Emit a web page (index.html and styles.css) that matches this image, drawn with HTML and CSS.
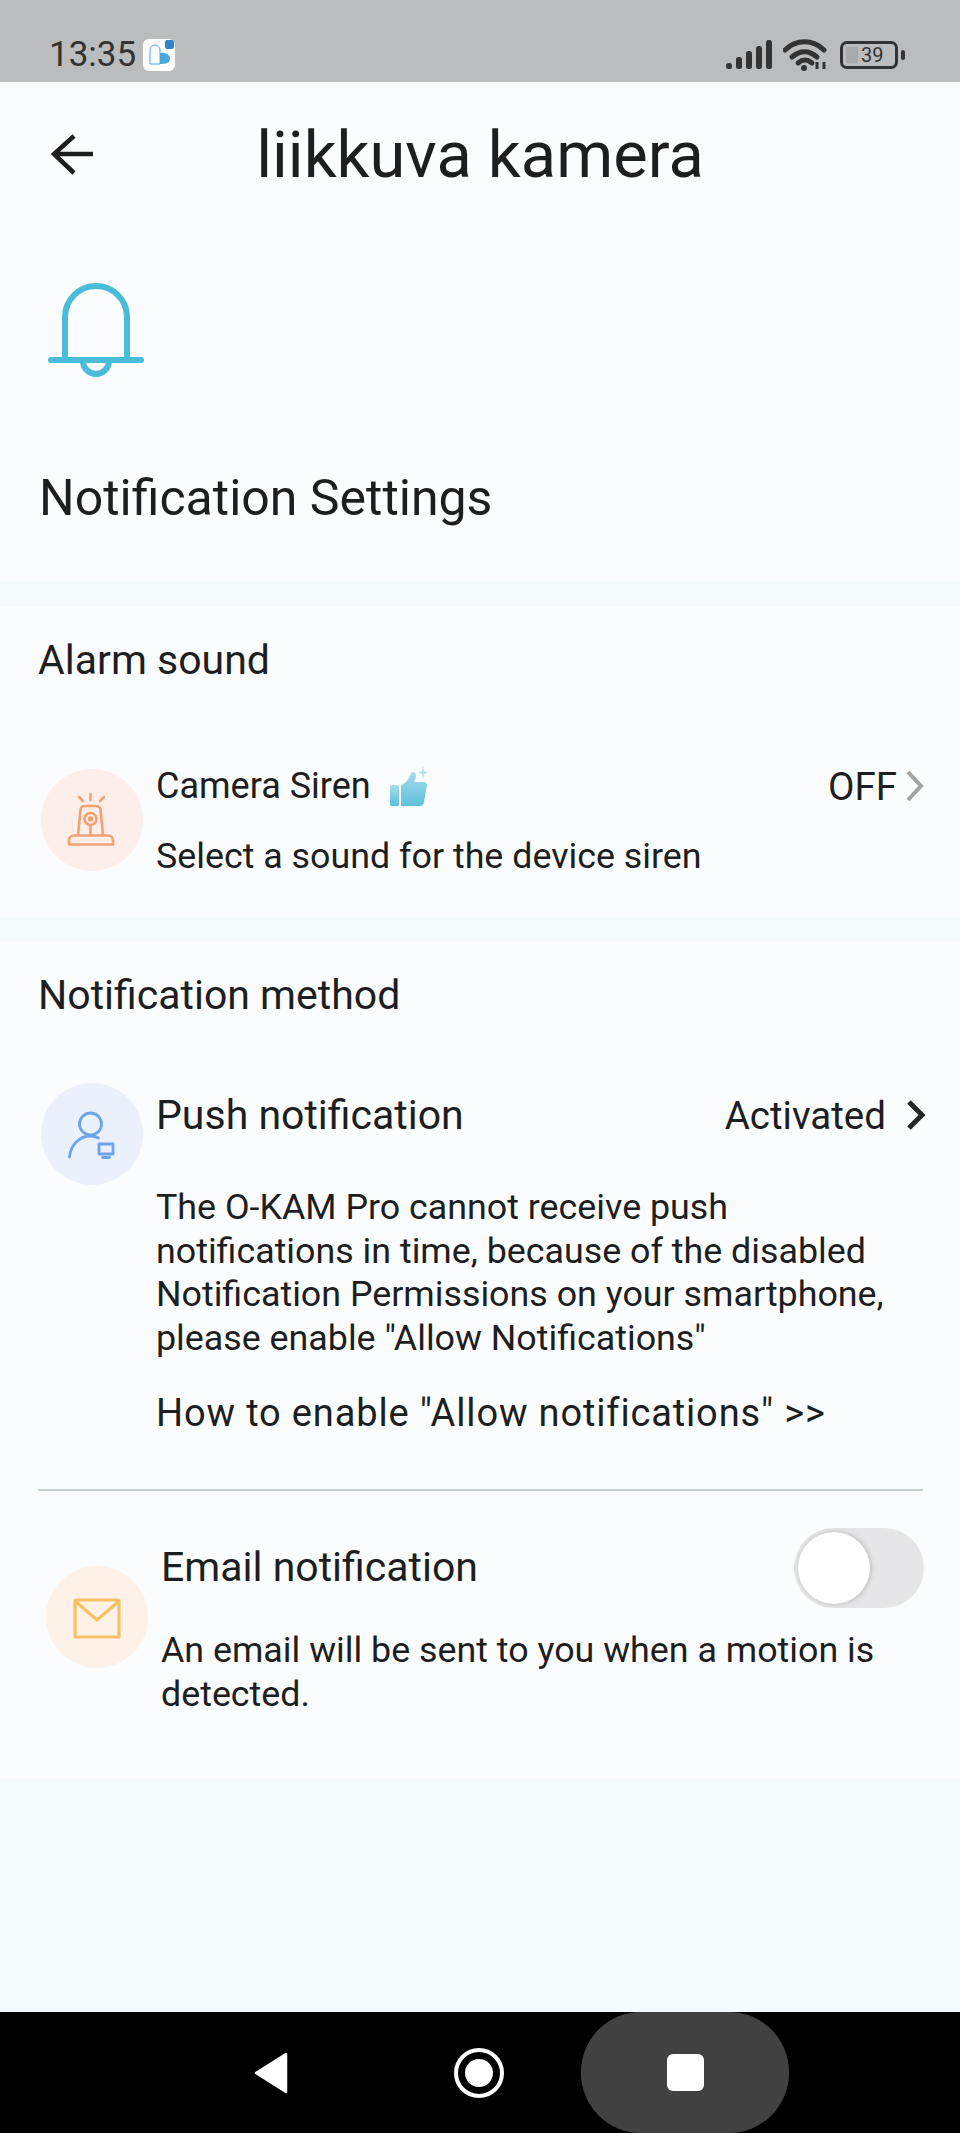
FILE: index.html
```html
<html>
  <head>
    <link rel="stylesheet" href="styles.css">
    <title>Notification Settings</title>
  </head>
  <body>
    <div class="status">
      <span class="time">13:35</span>
      <svg class="app-icon" width="32" height="32" viewBox="0 0 32 32">
        <rect width="32" height="32" rx="6" fill="#fff"/>
        <path d="M7 25V11a5 5 0 0 1 10 0v14z" fill="none" stroke="#4aa8dc" stroke-width="1"/>
        <path d="M17 14c6-1 10 2 10 6s-5 5-10 5z" fill="#4aa8dc"/>
        <rect x="22" y="1" width="9" height="9" rx="2" fill="#2f86cf"/>
      </svg>
      <div class="status-right">
        <svg width="46" height="29" viewBox="0 0 46 29" fill="#333">
          <rect x="0" y="23" width="6" height="6" rx="2.5"/>
          <rect x="10" y="17" width="6" height="12" rx="2.5"/>
          <rect x="20" y="11" width="6" height="18" rx="2.5"/>
          <rect x="30" y="6" width="6" height="23" rx="2.5"/>
          <rect x="40" y="0" width="6" height="29" rx="2.5"/>
        </svg>
        <svg class="wifi" width="46" height="32" viewBox="0 0 46 32" fill="none" stroke="#333" stroke-width="5" stroke-linecap="round">
          <path d="M2 11C13 0 30 0 41 11"/>
          <path d="M9 18c8-7 17-7 25 0"/>
          <path d="M15 24c5-4 9-4 14 0"/>
          <circle cx="21" cy="29" r="3" fill="#333" stroke="none"/>
          <path d="M34 23v7M41 23v7" stroke-width="3" stroke-linecap="butt"/>
        </svg>
        <div class="battery">
          <div class="battery-fill"></div>
          <span class="battery-num">39</span>
        </div>
        <div class="battery-nub"></div>
      </div>
    </div>

    <div class="topbar">
      <svg class="back" width="44" height="44" viewBox="0 0 44 44" fill="none" stroke="#1c1e20" stroke-width="4.5">
        <path d="M44 21H5M25 3L5 21l20 19"/>
      </svg>
      <h1 class="title">liikkuva kamera</h1>
    </div>

    <div class="hero">
      <svg class="bell" width="96" height="95" viewBox="0 0 96 95" fill="none" stroke="#48bcd8" stroke-width="6" stroke-linecap="round">
        <path d="M17 77V34a31 31 0 0 1 62 0v43"/>
        <path d="M3 77h90"/>
        <path d="M35 78a13 13 0 0 0 26 0"/>
      </svg>
      <h2 class="hero-title">Notification Settings</h2>
    </div>

    <div class="section section-alarm">
      <h3 class="section-title">Alarm sound</h3>
      <div class="row row-siren">
        <div class="badge badge-red">
          <svg width="102" height="102" viewBox="0 0 102 102" fill="none" stroke="#f3a274" stroke-width="2.6" stroke-linecap="round" stroke-linejoin="round">
            <path d="M49.5 25v6M38 28l4 4M63 28l-4 4"/>
            <path d="M37 66l2.500-25a4 4 0 0 1 4-4h12a4 4 0 0 1 4 4l2.500 25"/>
            <circle cx="49.5" cy="50" r="6"/>
            <circle cx="49.5" cy="50" r="1.4"/>
            <path d="M49.5 56v10"/>
            <path d="M28 75.500v-4a5 5 0 0 1 5-5h34a5 5 0 0 1 5 5v4z"/>
          </svg>
        </div>
        <div class="row-body">
          <div class="siren-head">
            <span class="siren-name">Camera Siren</span>
            <svg class="thumb" width="38" height="41" viewBox="0 0 38 41">
              <defs>
                <linearGradient id="thumbfill" x1="0" y1="0" x2="0" y2="1">
                  <stop offset="0" stop-color="#a7dcec"/>
                  <stop offset="1" stop-color="#5cc0dc"/>
                </linearGradient>
              </defs>
              <rect x="0" y="19" width="9" height="21" rx="1.500" fill="url(#thumbfill)"/>
              <path d="M11 19c5-2 8-6 10-12 1-2 5-1 5 2 0 3-1 5-2 7h10c2 0 3 2 3 3l-3 17c-1 3-2 4-4 4H11z" fill="url(#thumbfill)"/>
              <path d="M33 0l1.200 5 3.800 1.500-3.800 1.500-1.200 5-1.200-5-3.800-1.500 3.800-1.500z" fill="#b7e4f0"/>
            </svg>
            <span class="off">OFF</span>
            <svg class="off-arrow" width="18" height="32" viewBox="0 0 18 32" fill="none" stroke="#a3a3a3" stroke-width="4">
              <path d="M2 2l13 14L2 30"/>
            </svg>
          </div>
          <p class="siren-desc">Select a sound for the device siren</p>
        </div>
      </div>
    </div>

    <div class="section section-method">
      <h3 class="section-title">Notification method</h3>
      <div class="row row-push">
        <div class="badge badge-blue">
          <svg width="102" height="102" viewBox="0 0 102 102" fill="none" stroke="#6ca5ec" stroke-width="2.800" stroke-linecap="round" stroke-linejoin="round">
            <circle cx="49.500" cy="41" r="11"/>
            <path d="M28.500 74c1-12 10-21 21-21 4 0 6 1 8 2"/>
            <rect x="58" y="61" width="14" height="10"/>
            <path d="M61.500 74.500h7"/>
          </svg>
        </div>
        <div class="row-body">
          <div class="push-head">
            <span class="row-name">Push notification</span>
            <span class="activated">Activated</span>
            <svg class="push-arrow" width="20" height="32" viewBox="0 0 20 32" fill="none" stroke="#24262a" stroke-width="5">
              <path d="M3 3l13 13L3 29"/>
            </svg>
          </div>
          <p class="row-desc push-desc">The O-KAM Pro cannot receive push notifications in time, because of the disabled Notification Permissions on your smartphone, please enable "Allow Notifications"</p>
          <p class="howto">How to enable "Allow notifications" &gt;&gt;</p>
        </div>
      </div>
      <div class="divider"></div>
      <div class="row row-email">
        <div class="badge badge-orange">
          <svg width="102" height="102" viewBox="0 0 102 102" fill="none" stroke="#f7c264" stroke-width="3.200" stroke-linejoin="round">
            <rect x="29" y="34" width="44" height="37" rx="1"/>
            <path d="M29 35l22 19 22-19"/>
          </svg>
        </div>
        <div class="row-body">
          <div class="email-head">
            <span class="row-name email-name">Email notification</span>
            <div class="toggle"><div class="knob"></div></div>
          </div>
          <p class="row-desc email-desc">An email will be sent to you when a motion is detected.</p>
        </div>
      </div>
    </div>

    <div class="filler"></div>

    <div class="navbar">
      <svg width="34" height="42" viewBox="0 0 34 42"><path d="M32 2v38L2 21z" fill="#fff" stroke="#fff" stroke-width="2.500" stroke-linejoin="round"/></svg>
      <svg class="nav-home" width="50" height="50" viewBox="0 0 50 50" fill="none">
        <circle cx="25" cy="25" r="23" stroke="#fff" stroke-width="4"/>
        <circle cx="25" cy="25" r="14" fill="#fff"/>
      </svg>
      <div class="nav-pill"><div class="nav-square"></div></div>
    </div>
  </body>
</html>
```

FILE: styles.css
```css
* {
  box-sizing: border-box;
}
body {
  margin: 0;
  height: 2133px;
  display: flex;
  flex-direction: column;
  font-family: Roboto, "Liberation Sans", sans-serif;
  color: #1c1e21;
  background-color: #f5fafd;
  overflow: hidden;
}
h1, h2, h3, p {
  margin: 0;
  font-weight: 400;
}

.status {
  height: 82px;
  background-color: #bbbcbe;
  display: flex;
  align-items: center;
  padding: 27px 0 0 49px;
}
.time {
  font-size: 35px;
  color: #333;
}
.app-icon {
  margin-left: 7px;
}
.status-right {
  margin-left: auto;
  display: flex;
  align-items: center;
  padding-right: 55px;
}
.wifi {
  margin-left: 11px;
}
.battery {
  margin-left: 11px;
  width: 58px;
  height: 28px;
  border: solid 3px #333;
  border-radius: 7px;
  padding: 3px;
  display: flex;
  align-items: center;
}
.battery-fill {
  width: 12px;
  height: 100%;
  background-color: #a9aaac;
}
.battery-num {
  font-size: 20px;
  color: #333;
  margin-left: 3px;
}
.battery-nub {
  width: 4px;
  height: 10px;
  margin-left: 3px;
  background-color: #333;
  border-radius: 2px;
}

.topbar {
  height: 148px;
  padding-bottom: 2px;
  background-color: #fbfcfe;
  display: flex;
  align-items: center;
  justify-content: center;
  position: relative;
}
.back {
  position: absolute;
  left: 49px;
  top: 51px;
}
.title {
  font-size: 65px;
}

.hero {
  height: 351px;
  background-color: #fbfcfe;
  padding: 53px 0 0 48px;
}
.bell {
  display: block;
}
.hero-title {
  font-size: 50px;
  margin: 92px 0 0 -9px;
  line-height: 56px;
}

.section {
  background-color: #fbfcfe;
  margin-top: 26px;
  padding: 0 37px 0 38px;
}
.section-alarm {
  height: 311px;
}
.section-method {
  height: 838px;
  margin-top: 23px;
}
.section-title {
  font-size: 41px;
  line-height: 48px;
  padding-top: 29px;
  height: 76px;
}
.section-method .section-title {
  padding-top: 30px;
}

.row {
  display: flex;
}
.row-siren {
  margin-top: 86px;
}
.row-push {
  margin-top: 66px;
}
.row-email {
  padding-left: 5px;
  margin-top: 37px;
}
.row-body {
  flex: 1;
  margin-left: 13px;
}
.badge {
  width: 102px;
  height: 102px;
  border-radius: 50%;
  flex: none;
  margin-left: 3px;
}
.badge svg {
  display: block;
}
.badge-red {
  background-color: #fdeee9;
}
.badge-blue {
  background-color: #eaf1fd;
}
.badge-orange {
  background-color: #fdf1e8;
  margin-top: 38px;
}

.siren-head, .push-head, .email-head {
  display: flex;
  align-items: center;
}
.siren-head {
  height: 34px;
}
.siren-name {
  font-size: 36px;
}
.thumb {
  margin-left: 19px;
}
.off {
  margin-left: auto;
  font-size: 38.500px;
  margin-right: 9px;
}
.off-arrow {
  margin-right: -1px;
}
.siren-desc {
  font-size: 35.800px;
  line-height: 44px;
  margin-top: 31px;
}

.push-head {
  height: 46px;
  margin-top: 9px;
}
.row-name {
  font-size: 41px;
}
.activated {
  margin-left: auto;
  font-size: 38.500px;
  margin-right: 20px;
}
.push-arrow {
  margin-right: -3px;
}
.row-desc {
  font-size: 35.800px;
  line-height: 43.500px;
}
.push-desc {
  margin-top: 48px;
}
.howto {
  font-size: 38px;
  letter-spacing: 0.85px;
  line-height: 44px;
  margin-top: 31px;
}

.divider {
  height: 2px;
  background-color: #c5d0d2;
  margin-top: 54px;
}

.email-head {
  justify-content: space-between;
}
.email-name {
  margin-bottom: 3px;
}
.toggle {
  width: 130px;
  height: 80px;
  margin-right: -1px;
  border-radius: 40px;
  background-color: #e6e6e8;
  padding: 4px;
}
.knob {
  width: 72px;
  height: 72px;
  border-radius: 50%;
  background-color: #fff;
  box-shadow: 1px 0 5px #b5b5b5;
}
.email-desc {
  margin-top: 21px;
}

.filler {
  flex: 1;
}
.navbar {
  height: 121px;
  background-color: #000;
  display: flex;
  align-items: center;
  padding-left: 254px;
}
.nav-home {
  margin-left: 166px;
}
.nav-pill {
  width: 208px;
  height: 121px;
  border-radius: 60px;
  background-color: #414141;
  margin-left: 77px;
  display: flex;
  align-items: center;
  justify-content: center;
}
.nav-square {
  width: 37px;
  height: 37px;
  border-radius: 6px;
  background-color: #fff;
}
```
